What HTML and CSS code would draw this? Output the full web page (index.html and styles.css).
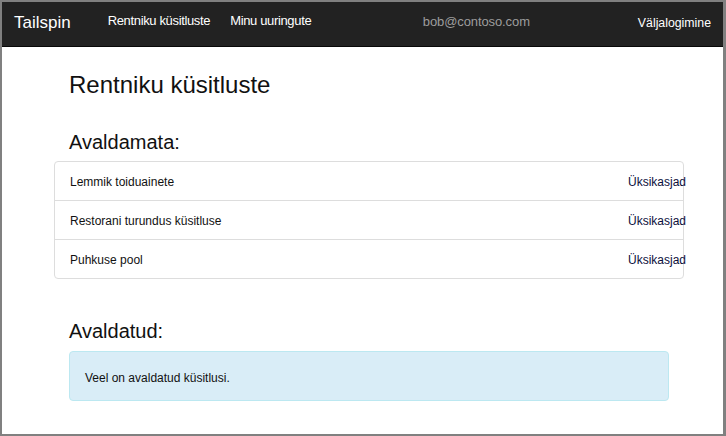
FILE: index.html
```html
<!DOCTYPE html>
<html lang="et">
<head>
<meta charset="utf-8">
<title>Tailspin</title>
<link rel="stylesheet" href="styles.css">
</head>
<body>
<div class="frame">
  <nav class="navbar">
    <a class="brand" href="#">Tailspin</a>
    <a class="nav-link first" href="#">Rentniku küsitluste</a>
    <a class="nav-link second" href="#">Minu uuringute</a>
    <span class="user">bob@contoso.com</span>
    <a class="logout" href="#">Väljalogimine</a>
  </nav>
  <main class="container">
    <h1 class="title">Rentniku küsitluste</h1>
    <h2 class="section unpublished">Avaldamata:</h2>
    <ul class="list">
      <li class="item"><span class="name">Lemmik toiduainete</span><a class="details" href="#">Üksikasjad</a></li>
      <li class="item"><span class="name">Restorani turundus küsitluse</span><a class="details" href="#">Üksikasjad</a></li>
      <li class="item"><span class="name">Puhkuse pool</span><a class="details" href="#">Üksikasjad</a></li>
    </ul>
    <h2 class="section published">Avaldatud:</h2>
    <div class="alert">Veel on avaldatud küsitlusi.</div>
  </main>
</div>
</body>
</html>
```

FILE: styles.css
```css
html, body {
  margin: 0;
  padding: 0;
}
body {
  font-family: "Liberation Sans", Arial, sans-serif;
  color: #111;
  background: #ffffff;
}
.frame {
  box-sizing: border-box;
  width: 726px;
  height: 436px;
  border: 2px solid #808080;
  border-right-width: 3px;
  background: #fff;
  overflow: hidden;
}
.navbar {
  display: flex;
  align-items: flex-start;
  height: 44px;
  background: #222222;
  border-bottom: 1px solid #080808;
  line-height: 20px;
}
.navbar a {
  text-decoration: none;
}
.brand {
  color: #fff;
  font-size: 17px;
  padding-top: 11px;
  margin-left: 12px;
}
.nav-link {
  color: #fff;
  font-size: 13px;
  letter-spacing: -0.35px;
  padding-top: 9px;
}
.nav-link.first {
  margin-left: 37px;
}
.nav-link.second {
  margin-left: 20px;
}
.user {
  color: #9d9d9d;
  font-size: 13px;
  letter-spacing: -0.1px;
  padding-top: 10px;
  margin-left: auto;
  margin-right: 108px;
}
.logout {
  color: #fff;
  font-size: 12.3px;
  padding-top: 11px;
  margin-right: 12px;
}
.container {
  width: 600px;
  margin-left: 67px;
  padding-top: 25px;
}
.title {
  margin: 0;
  font-size: 24px;
  font-weight: normal;
  line-height: 26px;
  color: #111;
}
.section {
  margin: 0;
  font-size: 20px;
  font-weight: normal;
  line-height: 22px;
  color: #111;
}
.unpublished {
  margin-top: 33px;
  margin-bottom: 8px;
}
.published {
  margin-top: 41px;
  margin-bottom: 9px;
}
.list {
  list-style: none;
  margin: 0 -15px;
  padding: 0;
  border: 1px solid #dddddd;
  border-radius: 4px;
}
.item {
  display: flex;
  justify-content: space-between;
  padding: 11px 0 9px 15px;
  font-size: 12px;
  line-height: 18px;
  color: #111;
}
.item + .item {
  border-top: 1px solid #dddddd;
}
.details {
  color: #0c0f3c;
  text-decoration: none;
  margin-right: -3px;
}
.alert {
  box-sizing: border-box;
  background: #d9edf7;
  border: 1px solid #bce8f1;
  border-radius: 4px;
  padding: 17px 15px 13px;
  font-size: 12px;
  line-height: 18px;
  color: #111;
}
```
